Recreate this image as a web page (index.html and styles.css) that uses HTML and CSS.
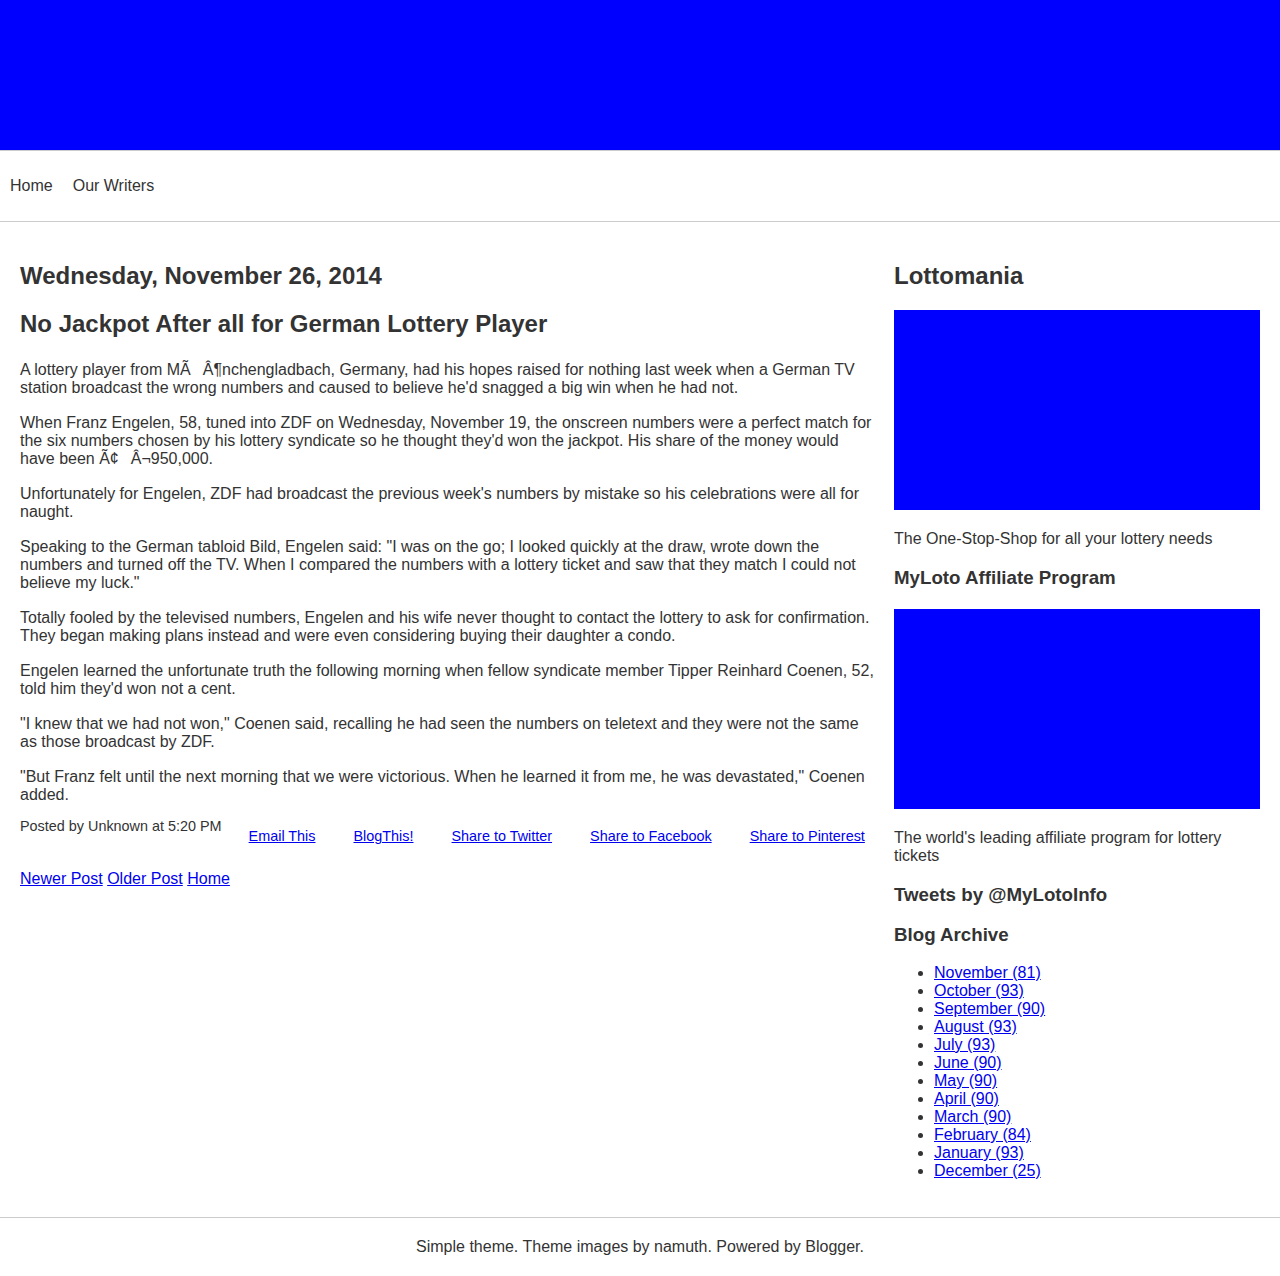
FILE: index.html
```html
<!DOCTYPE html>
<html>
<head>
<meta charset="utf-8">
<title>Lottomania</title>
<link rel="stylesheet" href="styles.css">
</head>
<body>
<header class="banner"></header>
<nav class="nav">
  <a href="#">Home</a>
  <a href="#">Our Writers</a>
</nav>
<div class="page">
  <main class="main">
    <h2 class="date">Wednesday, November 26, 2014</h2>
    <h2 class="title">No Jackpot After all for German Lottery Player</h2>
    <div class="body">
      <p>A lottery player from MÃ<span class="gap"></span>Â¶nchengladbach, Germany, had his hopes raised for nothing last week when a German TV station broadcast the wrong numbers and caused to believe he'd snagged a big win when he had not.</p>
      <p>When Franz Engelen, 58, tuned into ZDF on Wednesday, November 19, the onscreen numbers were a perfect match for the six numbers chosen by his lottery syndicate so he thought they'd won the jackpot. His share of the money would have been Ã¢<span class="gap"></span>Â¬950,000.</p>
      <p>Unfortunately for Engelen, ZDF had broadcast the previous week's numbers by mistake so his celebrations were all for naught.</p>
      <p>Speaking to the German tabloid Bild, Engelen said: "I was on the go; I looked quickly at the draw, wrote down the numbers and turned off the TV. When I compared the numbers with a lottery ticket and saw that they match I could not believe my luck."</p>
      <p>Totally fooled by the televised numbers, Engelen and his wife never thought to contact the lottery to ask for confirmation. They began making plans instead and were even considering buying their daughter a condo.</p>
      <p>Engelen learned the unfortunate truth the following morning when fellow syndicate member Tipper Reinhard Coenen, 52, told him they'd won not a cent.</p>
      <p>"I knew that we had not won," Coenen said, recalling he had seen the numbers on teletext and they were not the same as those broadcast by ZDF.</p>
      <p>"But Franz felt until the next morning that we were victorious. When he learned it from me, he was devastated," Coenen added.</p>
    </div>
    <div class="post-footer">
      <span class="posted">Posted by Unknown at 5:20 PM</span>
      <div class="share">
        <a href="#">Email This</a>
        <a href="#">BlogThis!</a>
        <a href="#">Share to Twitter</a>
        <a href="#">Share to Facebook</a>
        <a href="#">Share to Pinterest</a>
      </div>
    </div>
    <div class="pager">
      <a href="#">Newer Post</a> <a href="#">Older Post</a> <a href="#">Home</a>
    </div>
  </main>
  <aside class="side">
    <h2 class="side-title">Lottomania</h2>
    <div class="promo"></div>
    <p class="caption">The One-Stop-Shop for all your lottery needs</p>
    <h3 class="widget">MyLoto Affiliate Program</h3>
    <div class="promo"></div>
    <p class="caption">The world's leading affiliate program for lottery tickets</p>
    <h3 class="widget">Tweets by @MyLotoInfo</h3>
    <h3 class="widget">Blog Archive</h3>
    <ul class="archive">
      <li><a href="#">November (81)</a></li>
      <li><a href="#">October (93)</a></li>
      <li><a href="#">September (90)</a></li>
      <li><a href="#">August (93)</a></li>
      <li><a href="#">July (93)</a></li>
      <li><a href="#">June (90)</a></li>
      <li><a href="#">May (90)</a></li>
      <li><a href="#">April (90)</a></li>
      <li><a href="#">March (90)</a></li>
      <li><a href="#">February (84)</a></li>
      <li><a href="#">January (93)</a></li>
      <li><a href="#">December (25)</a></li>
    </ul>
  </aside>
</div>
<footer class="footer">Simple theme. Theme images by namuth. Powered by Blogger.</footer>
</body>
</html>
```
FILE: styles.css
```css
html, body {
  margin: 0;
  padding: 0;
}
body {
  font-family: "Liberation Sans", Arial, sans-serif;
  font-size: 16px;
  color: #333;
  background: #fff;
}
a {
  color: #0000ee;
}
.banner {
  height: 150px;
  background: #0000ff;
  border-bottom: 1px solid #ccc;
}
.nav {
  height: 70px;
  display: flex;
  align-items: center;
  padding: 0 10px;
  gap: 20px;
  border-bottom: 1px solid #ccc;
}
.nav a {
  color: #333;
  text-decoration: none;
}
.page {
  display: flex;
  gap: 20px;
  padding: 20px 20px 37px 20px;
}
.main {
  flex: 1;
  min-width: 0;
}
.side {
  width: 366px;
  flex: none;
}
h2 {
  font-size: 24px;
  margin: 20px 0;
}
.date {
  margin-top: 20px;
}
.title {
  margin-bottom: 23px;
}
.body p {
  margin: 17px 0;
}
.body p:last-child {
  margin-bottom: 0;
}
.gap {
  display: inline-block;
  width: 12px;
}
.post-footer {
  display: flex;
  align-items: flex-start;
  margin-top: 14px;
}
.posted {
  font-size: 14.4px;
}
.share {
  display: flex;
  gap: 38px;
  margin-left: 27px;
  padding-top: 10px;
  font-size: 14.4px;
}
.pager {
  margin-top: 26px;
}
.side-title {
  margin-top: 20px;
  margin-bottom: 20px;
}
.promo {
  height: 200px;
  background: #0000ff;
}
.caption {
  margin: 20px 0 19px;
}
.widget {
  font-size: 18.72px;
  margin: 18px 0;
}
.widget + .promo {
  margin-top: 20px;
}
.archive {
  margin: 0;
  padding-left: 40px;
}
.footer {
  border-top: 1px solid #ccc;
  text-align: center;
  padding: 20px 0 21px;
}
```
